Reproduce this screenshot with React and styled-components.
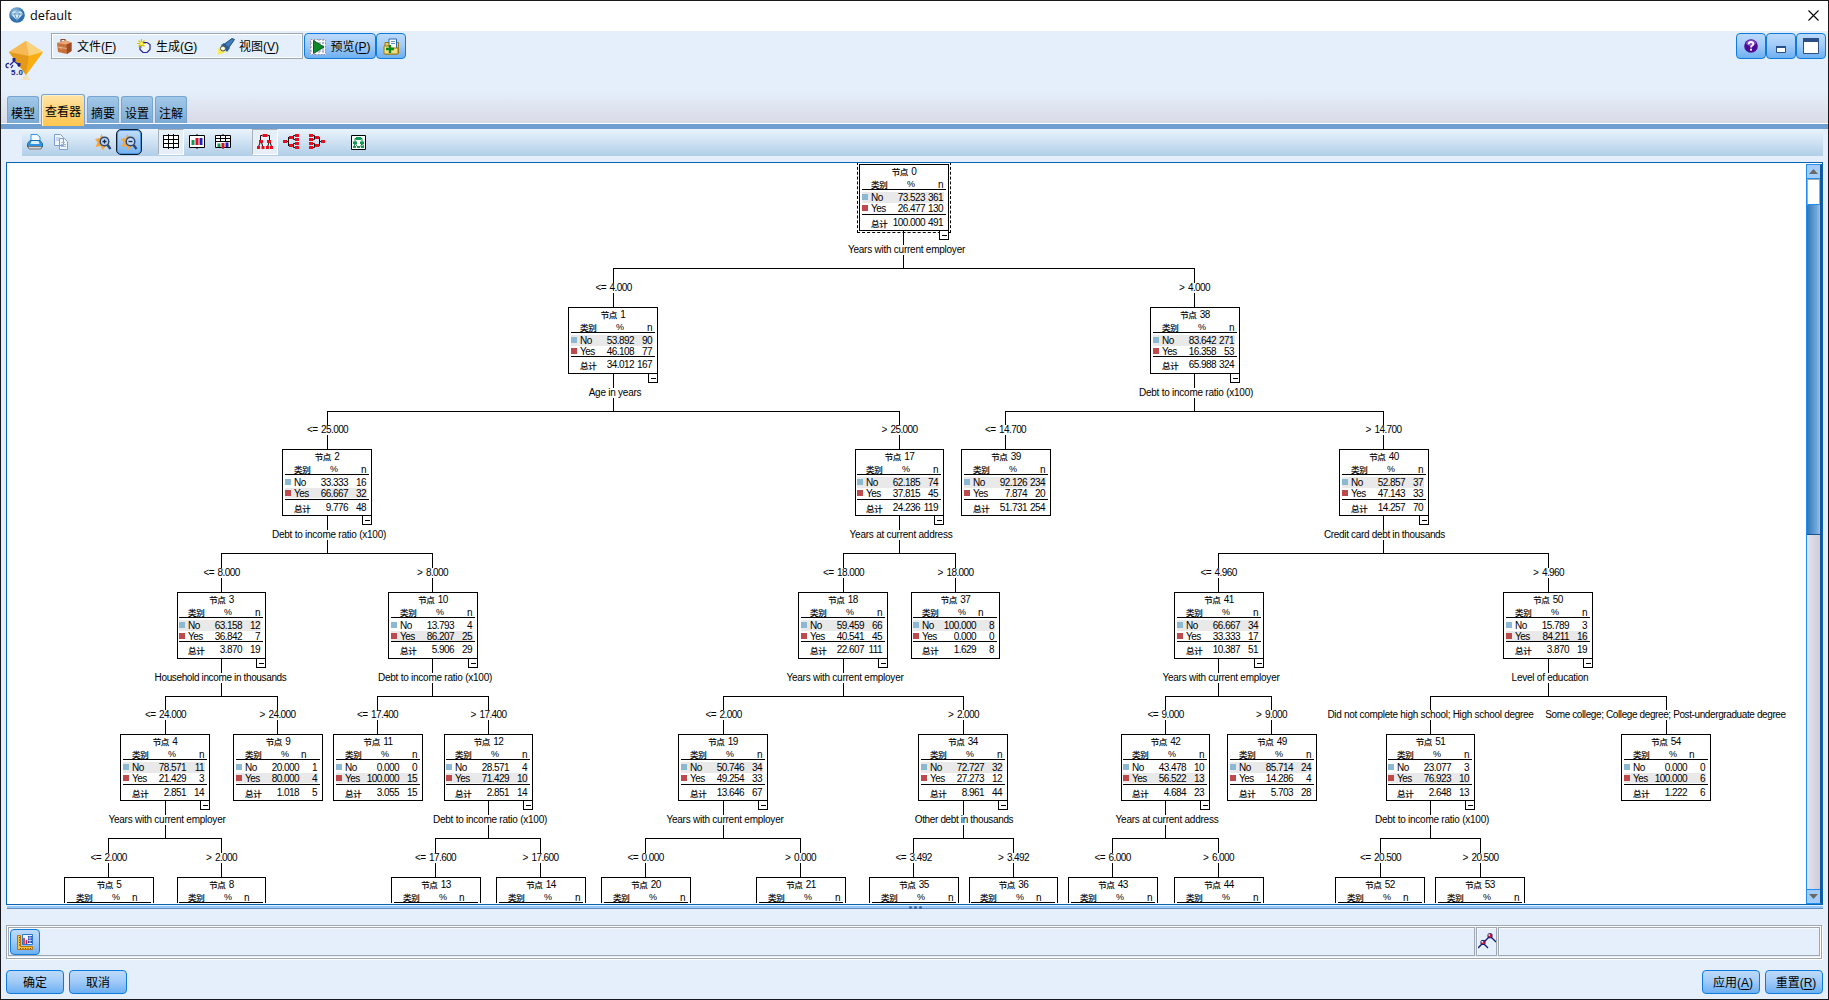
import React from "react";
import styled, { createGlobalStyle, css } from "styled-components";

const Global = createGlobalStyle`
  * { box-sizing: border-box; }
  html, body { margin: 0; padding: 0; height: 1000px; overflow: hidden; }
  body { font-family: "Liberation Sans", "Noto Sans CJK SC", sans-serif; font-size: 12px; color: #000; }
  svg { display: block; flex: none; }
`;

/* ---------- window chrome ---------- */
const Window = styled.div`
  width: 1829px; height: 1000px; overflow: hidden;
  display: flex; flex-direction: column;
  border: 1px solid #17171c;
  background: #e4effb;
`;
const TitleBar = styled.header`
  height: 30px; flex: none;
  display: flex; align-items: center; justify-content: space-between;
  padding: 0 9px 2px 8px;
  background: #fff;
`;
const Title = styled.div`
  display: flex; align-items: center; gap: 5px;
  font: 12.7px/16px "Open Sans", "Noto Sans", sans-serif;
`;
const Header = styled.section`
  height: 92px; flex: none;
  display: flex; flex-direction: column; justify-content: space-between;
  background: linear-gradient(#e4effb 0 60px, #d9dae6 92px);
`;
const HeaderTop = styled.div`
  display: flex; align-items: flex-start; padding: 2px 2px 0 5px;
`;
const LogoBox = styled.div` width: 45px; padding-top: 7px; height: 52px; flex: none; margin-left: -1px; margin-right: 1px; `;
const MenuBar = styled.nav`
  width: 252px; height: 26px;
  display: flex; align-items: center;
  padding-left: 4px;
  border: 1px solid #a0a8b2;
  box-shadow: inset 1px 1px #fff, inset -1px -1px #fff;
`;
const MenuItem = styled.div`
  width: 81px; display: flex; align-items: center; gap: 4px;
  line-height: 20px; white-space: nowrap; padding-top: 1px;
  span { padding-top: 1px; }
`;
const Key = styled.u` text-underline-offset: 2px; `;
const Button = styled.button`
  width: ${p => p.$w}px; height: ${p => p.$h || 26}px; flex: none;
  display: flex; align-items: center; justify-content: center; gap: 4px;
  margin: 0; padding: ${p => p.$pad || "0"};
  font: 12px/20px "Liberation Sans", "Noto Sans CJK SC", sans-serif; color: #000; white-space: nowrap;
  border: 1px solid #0c7bdc; border-radius: 4px;
  background: linear-gradient(#bddafb, #a3ccf8 45%, #6eb0f2);
`;
const Group = styled.div` display: flex; margin-left: ${p => p.$left || "0"}; gap: ${p => p.$gap || 0}px; `;
const Tabs = styled.div`
  display: flex; align-items: flex-end; gap: 2px; padding-left: 6px; height: 29px;
`;
const Tab = styled.div`
  width: 32px; height: 27px; line-height: 34px; text-align: center;
  border: 1px solid #74a5d3; border-bottom: 0; border-radius: 3px 3px 0 0;
  background: linear-gradient(#a3c8e8, #7caad4);
  ${p => p.$active && css`
    width: 44px; height: 32px; margin-bottom: -3px; z-index: 1; line-height: 34px;
    background: linear-gradient(#ffe3a6, #ffc64f);
    box-shadow: inset 1px 1px #ffefc8;
  `}
`;
const Band = styled.div`
  height: 6px; flex: none; background: #6f9fd0; border-top: 1px solid #fff;
`;
const ToolBar = styled.div`
  height: 27px; margin: 0 5px 0 21px; flex: none;
  display: flex; align-items: flex-start;
  background: linear-gradient(#eaf4fd, #b1cee7);
`;
const Tool = styled.div`
  width: 26px; height: 26px; margin-left: ${p => p.$gap || 0}px;
  display: flex; align-items: center; justify-content: center;
  ${p => p.$pressed && css`border: 1px solid #a9b1bb; border-right-color: #fff; border-bottom-color: #fff; background: #e6eff8;`}
  ${p => p.$focused && css`border: 1px solid #0d1c2c; border-radius: 5px; background: linear-gradient(#c4ddf8, #75b3f2); box-shadow: inset 0 0 0 1px #4d96dd;`}
`;

/* ---------- tree viewer ---------- */
const Viewer = styled.main`
  height: 743px; margin: 6px 5px 0 5px; flex: none;
  display: flex; justify-content: space-between;
  border: 1px solid #0a64b4; background: #fff;
`;
const Canvas = styled.div`
  position: relative; width: 1798px; height: 740px; overflow: hidden;
`;
const Links = styled.svg` position: absolute; left: 0; top: 0; `;
const NodeBox = styled.div`
  position: absolute; left: ${p => p.$x}px; top: ${p => p.$y}px;
  width: ${p => p.$w}px; height: 67px; padding: 0 ${p => (p.$w < 90 ? 1 : 2)}px;
  border: 1px solid #000; background: #fff;
  font-size: 10px; letter-spacing: -0.55px;
  ${p => p.$root && css`outline: 1px dashed #000; outline-offset: 1px;`}
`;
const Cjk = styled.span` font: 8.5px "Noto Sans CJK SC", sans-serif; letter-spacing: -0.3px; -webkit-text-stroke: 0.2px #000; `;
const NodeTitle = styled.div` height: 13px; line-height: 12px; text-align: center; white-space: pre; word-spacing: 1px; `;
const Grid = styled.div`
  display: grid; grid-template-columns: 9px 18px 36px 18px 1px;
  align-items: center; height: ${p => p.$h}px; line-height: 11px;
  background: ${p => (p.$hot ? "#e9e9e9" : "none")};
  width: 82px;
`;
const HeadRow = styled(Grid)` width: 84px; border-bottom: 1px solid #000; `;
const Body = styled.div` padding-top: 2px; width: 84px; height: ${p => p.$h}px; border-bottom: 1px solid #000; `;
const Num = styled.span` text-align: right; white-space: nowrap; `;
const Percent = styled.span` padding-left: 18px; font-size: 9px; `;
const CountHead = styled.span` text-align: right; padding-right: ${p => (p.$shift ? 11 : 0)}px; `;
const Swatch = styled.span` width: 6px; height: 6px; margin-top: -2px; background: ${p => p.$c}; `;
const Toggle = styled.span`
  position: absolute; right: -1px; top: 65px; width: 10px; height: 10px;
  display: flex; align-items: center; justify-content: center;
  border: 1px solid #000; background: #fff;
  &::after { content: ""; width: 5px; height: 1px; background: #000; }
`;
const Label = styled.div`
  position: absolute; left: ${p => p.$x}px; top: ${p => p.$y}px;
  transform: translateX(-50%);
  height: 10px; line-height: 10px; font-size: 10px; white-space: pre;
  letter-spacing: ${p => (p.$value ? -0.6 : p.$ls)}px; background: #fff;
  word-spacing: ${p => (p.$value ? 1.5 : 0)}px;
`;

const ScrollBar = styled.div`
  width: 16px; margin: 1px 0 0; height: 740px; display: flex; flex-direction: column;
  border: 1px solid #1e8ff0; border-right: 2px solid #1a5596; background: linear-gradient(90deg, #e3e3ea, #cdccd8);
`;
const ScrollButton = styled.div`
  height: 14px; flex: none; display: flex; align-items: center; justify-content: center;
  background: #a4cdfb; border: solid #1e8ff0; border-width: ${p => (p.$down ? "1px 0 0" : "0 0 1px")};
`;
const TrackTop = styled.div` height: 26px; flex: none; background: #fff; border: 1px solid #aaa; border-bottom-color: #1e8ff0; `;
const Thumb = styled.div` height: 330px; flex: none; background: linear-gradient(90deg, #3177b5, #72a9dc 75%, #98c3eb); border-bottom: 1px solid #17548f; `;
const TrackRest = styled.div` flex: 1; `;

const Splitter = styled.div`
  height: 3px; margin: 1px 5px 0 6px; flex: none;
  display: flex; justify-content: center; gap: 2px;
  background: #99c9fb; border-bottom: 1px solid #608ec4;
`;
const Grip = styled.i` width: 3px; height: 3px; border-radius: 50%; background: #3465a4; `;

/* ---------- status and actions ---------- */
const Status = styled.footer`
  height: 34px; margin: 16px 6px 0 5px; flex: none; display: flex; gap: 1px; padding: 1px;
  border: 1px solid #a0a7b4; box-shadow: inset -1px -1px #fff, inset 1px 1px #fff, 1px 1px #fff;
`;
const Cell = styled.div`
  ${p => (p.$w ? css`width: ${p.$w}px;` : css`flex: 1;`)}
  height: 29px; display: flex; align-items: center; padding: 0 1px;
  border: 1px solid #a0a7b4; box-shadow: inset 1px 1px #f6faff;
`;
const Actions = styled.div`
  margin: 11px 5px 0; display: flex; justify-content: space-between;
`;

/* ---------- data ---------- */
const LEVEL_Y = [164, 307, 449, 592, 734, 877];
const BAR_Y = [268, 411, 553, 696, 838];
const NARROW = [3, 17, 37, 12, 42, 51, 8, 36];
const OX = 7, OY = 163;
const n = (id, lv, left, cx, parent, cond, no, yes, tot, hot, split, opt = {}) =>
  ({ id, lv, left, cx, parent, cond, no, yes, tot, hot, split, ...opt });
const NODES = [
  n(0, 0, 859, 903, null, "", "73.523 361", "26.477 130", "100.000 491", 0, "Years with current employer", { dx: 3.5 }),
  n(1, 1, 568, 613, 0, "<= 4.000", "53.892 90", "46.108 77", "34.012 167", 0, "Age in years"),
  n(38, 1, 1150, 1194, 0, "> 4.000", "83.642 271", "16.358 53", "65.988 324", 0, "Debt to income ratio (x100)"),
  n(2, 2, 282, 327, 1, "<= 25.000", "33.333 16", "66.667 32", "9.776 48", 1, "Debt to income ratio (x100)"),
  n(17, 2, 855, 899, 1, "> 25.000", "62.185 74", "37.815 45", "24.236 119", 0, "Years at current address"),
  n(39, 2, 961, 1005, 38, "<= 14.700", "92.126 234", "7.874 20", "51.731 254", 0, ""),
  n(40, 2, 1339, 1383, 38, "> 14.700", "52.857 37", "47.143 33", "14.257 70", 0, "Credit card debt in thousands", { dx: 1.5, ls: -0.33 }),
  n(3, 3, 177, 221, 2, "<= 8.000", "63.158 12", "36.842 7", "3.870 19", 0, "Household income in thousands", { dx: -0.5, ls: -0.36 }),
  n(10, 3, 388, 432, 2, "> 8.000", "13.793 4", "86.207 25", "5.906 29", 1, "Debt to income ratio (x100)", { dx: 3 }),
  n(18, 3, 798, 843, 17, "<= 18.000", "59.459 66", "40.541 45", "22.607 111", 0, "Years with current employer"),
  n(37, 3, 911, 955, 17, "> 18.000", "100.000 8", "0.000 0", "1.629 8", 0, "", { shift: 1 }),
  n(41, 3, 1174, 1218, 40, "<= 4.960", "66.667 34", "33.333 17", "10.387 51", 0, "Years with current employer", { dx: 3 }),
  n(50, 3, 1503, 1548, 40, "> 4.960", "15.789 3", "84.211 16", "3.870 19", 1, "Level of education"),
  n(4, 4, 120, 165, 3, "<= 24.000", "78.571 11", "21.429 3", "2.851 14", 0, "Years with current employer"),
  n(9, 4, 233, 277, 3, "> 24.000", "20.000 1", "80.000 4", "1.018 5", 1, "", { shift: 1 }),
  n(11, 4, 333, 377, 10, "<= 17.400", "0.000 0", "100.000 15", "3.055 15", 1, ""),
  n(12, 4, 444, 488, 10, "> 17.400", "28.571 4", "71.429 10", "2.851 14", 1, "Debt to income ratio (x100)"),
  n(19, 4, 678, 723, 18, "<= 2.000", "50.746 34", "49.254 33", "13.646 67", 0, "Years with current employer"),
  n(34, 4, 918, 963, 18, "> 2.000", "72.727 32", "27.273 12", "8.961 44", 0, "Other debt in thousands", { dx: 1, ls: -0.36 }),
  n(42, 4, 1121, 1165, 41, "<= 9.000", "43.478 10", "56.522 13", "4.684 23", 1, "Years at current address"),
  n(49, 4, 1227, 1271, 41, "> 9.000", "85.714 24", "14.286 4", "5.703 28", 0, ""),
  n(51, 4, 1386, 1430, 50, "Did not complete high school; High school degree", "23.077 3", "76.923 10", "2.648 13", 1, "Debt to income ratio (x100)", { condLs: -0.29 }),
  n(54, 4, 1621, 1666, 50, "Some college; College degree; Post-undergraduate degree", "0.000 0", "100.000 6", "1.222 6", 1, "", { shift: 1, condLs: -0.39, condDx: -1 }),
  n(5, 5, 64, 108, 4, "<= 2.000", "", "", "", null, "", { shift: 1 }),
  n(8, 5, 177, 221, 4, "> 2.000", "", "", "", null, "", { shift: 1 }),
  n(13, 5, 391, 435, 12, "<= 17.600", "", "", "", null, "", { shift: 1 }),
  n(14, 5, 496, 540, 12, "> 17.600", "", "", "", null, ""),
  n(20, 5, 601, 645, 19, "<= 0.000", "", "", "", null, ""),
  n(21, 5, 756, 800, 19, "> 0.000", "", "", "", null, ""),
  n(35, 5, 869, 913, 34, "<= 3.492", "", "", "", null, ""),
  n(36, 5, 969, 1013, 34, "> 3.492", "", "", "", null, "", { shift: 1 }),
  n(43, 5, 1068, 1112, 42, "<= 6.000", "", "", "", null, ""),
  n(44, 5, 1174, 1218, 42, "> 6.000", "", "", "", null, ""),
  n(52, 5, 1335, 1380, 51, "<= 20.500", "", "", "", null, "", { shift: 1 }),
  n(53, 5, 1435, 1480, 51, "> 20.500", "", "", "", null, ""),
];

function Row({ color, name, value, hot, h }) {
  const [pct, count] = value.split(" ");
  return (
    <Grid $h={h} $hot={hot}>
      <Swatch $c={color} /><span>{name}</span><Num>{pct}</Num><Num>{count}</Num>
    </Grid>
  );
}

function TreeNode({ d }) {
  const [tp, tc] = d.tot.split(" ");
  return (
    <NodeBox $x={d.left - OX} $y={LEVEL_Y[d.lv] - OY} $w={NARROW.includes(d.id) ? 89 : 90} $root={d.id === 0}>
      <NodeTitle><Cjk>节点</Cjk> {d.id}</NodeTitle>
      <HeadRow $h={12}>
        <span /><Cjk>类别</Cjk><Percent>%</Percent><CountHead $shift={d.shift}>n</CountHead>
      </HeadRow>
      {d.no && (
        <>
          <Body $h={d.lv % 2 ? 24 : 25}>
            <Row color="#8bb8d2" name="No" value={d.no} hot={d.hot === 0} h={11} />
            <Row color="#bf4a4d" name="Yes" value={d.yes} hot={d.hot === 1} h={10} />
          </Body>
          <Grid $h={15}>
            <span /><Cjk>总计</Cjk><Num>{tp}</Num><Num>{tc}</Num>
          </Grid>
        </>
      )}
      {d.split && <Toggle />}
    </NodeBox>
  );
}

function Tree() {
  let path = "";
  NODES.forEach(p => {
    const kids = NODES.filter(k => k.parent === p.id);
    if (!kids.length) return;
    const py = LEVEL_Y[p.lv] - OY;
    const bar = BAR_Y[p.lv] - OY + 0.5;
    path += `M${p.cx - OX + 0.5} ${py + 66}V${bar}`;
    path += `M${kids[0].cx - OX} ${bar}H${kids[kids.length - 1].cx - OX + 1}`;
    kids.forEach(k => { path += `M${k.cx - OX + 0.5} ${bar}V${LEVEL_Y[k.lv] - OY}`; });
  });
  return (
    <Canvas>
      <Links width="1798" height="740"><path d={path} fill="none" stroke="#000" /></Links>
      {NODES.map(d => <TreeNode key={d.id} d={d} />)}
      {NODES.map(d => d.cond && (
        <Label key={d.id} $value={d.cond.length < 12} $ls={d.condLs} $x={d.cx - OX + 0.5 + (d.condDx || 0)} $y={LEVEL_Y[d.lv] - OY - 24}>{d.cond}</Label>
      ))}
      {NODES.map(d => d.split && (
        <Label key={d.id} $ls={d.ls ?? -0.24} $x={d.cx - OX + (d.dx ?? 2)} $y={LEVEL_Y[d.lv] - OY + 81}>{d.split}</Label>
      ))}
    </Canvas>
  );
}

/* ---------- icons ---------- */
const AppIcon = () => (
  <svg width="16" height="16" viewBox="0 0 16 16">
    <defs><radialGradient id="ball" cx=".4" cy=".3"><stop offset="0" stopColor="#9fc9e8" /><stop offset="1" stopColor="#2e6fae" /></radialGradient></defs>
    <circle cx="8" cy="8" r="7.8" fill="url(#ball)" />
    <path d="M4 4.5h8l2 2.5-6 6.5L2 7z" fill="#dcecf8" />
    <path d="M2 7h12M5.5 7 8 13.5 10.500 7 8 4.500z" fill="none" stroke="#5f9aca" />
  </svg>
);
const CloseIcon = () => (
  <svg width="11" height="11" viewBox="0 0 11 11"><path d="M.5.5l10 10M10.500.5l-10 10" stroke="#000" strokeWidth="1.1" /></svg>
);
const ModelLogo = () => (
  <svg width="40" height="42" viewBox="5 41 40 42">
    <defs><linearGradient id="gem" x1="0" x2="1"><stop offset="0" stopColor="#e79a12" /><stop offset="1" stopColor="#ffc52e" /></linearGradient></defs>
    <path d="M26 75l5 6H21z" fill="#f3dfb4" opacity=".8" />
    <path d="M26 42l17 11-17 23L9 53z" fill="url(#gem)" />
    <path d="M26 42l17 11-14 4L9 53z" fill="#fbd27c" /><path d="M26 42l3 15L9 53z" fill="#f6b956" />
    <path d="M29 57l-3 19L9 53z" fill="#e39a1b" /><path d="M29 57l14-4-17 23z" fill="#f9ae12" />
    <path d="M10 66l4-4 5 4M14 60v3M9 64.500q-2.500-.5-3 2 0 2.500 2.500 2M19 65v3M13 66l-2 3" fill="none" stroke="#20208a" strokeWidth="1.300" />
    <rect x="12.500" y="59" width="3" height="3" fill="#20208a" /><rect x="17.500" y="64" width="3" height="3" fill="#20208a" />
    <text x="11" y="75.500" fontSize="8" fontWeight="700" fill="#20208a" fontFamily="Liberation Sans" textLength="12">5.0</text>
  </svg>
);
const BagIcon = () => (
  <svg width="17" height="17" viewBox="0 0 17 17">
    <path d="M5 4V1.500h4V4" fill="none" stroke="#8a4a2a" strokeWidth="1.200" />
    <path d="M1 5l9-2.500 5.500 2V13L11 16 2 14z" fill="#c9713c" /><path d="M1 5l9.500 1.500L15.500 4.500 9.500 2.500z" fill="#e9a878" />
    <path d="M10.500 6.500l5-2V13l-4.500 3z" fill="#9a4c23" /><path d="M1.500 9l9 1.500M5 8.500v3" stroke="#e8b489" />
  </svg>
);
const GenerateIcon = () => (
  <svg width="15" height="15" viewBox="0 0 15 15">
    <path d="M6 3.500h4l3 2v5l-3 3H6l-3-3v-4z" fill="#eef5ff" stroke="#24249a" strokeWidth="1.200" />
    <path d="M4.500 0v9M0 4.500h9M1.500 1.500l6 6M7.500 1.500l-6 6" stroke="#d6c400" strokeWidth="1.200" /><circle cx="4.500" cy="4.500" r="1.500" fill="#fff36b" />
  </svg>
);
const TorchIcon = () => (
  <svg width="17" height="17" viewBox="0 0 17 17">
    <path d="M0 11l4-4 5 5-3.500 3.500L0 16.500z" fill="#f7e85a" /><path d="M3 7l3-2 6 5-3 4z" fill="#2d5f96" />
    <path d="M6.500 6L14 .5l2.500 1L10.500 10z" fill="#3f7fbd" stroke="#1f4b7c" /><circle cx="5" cy="10.500" r="2.500" fill="#fffbd0" stroke="#35506e" />
  </svg>
);
const PreviewIcon = () => (
  <svg width="16" height="16" viewBox="0 0 16 16">
    <path d="M0 0h16v16H0z" fill="#fff" /><path d="M.5.5h15v15H.5zM0 4h16M0 8h16M0 12h16M4.500 0v16M9 0v16M13 0v16" fill="none" stroke="#8b90b8" strokeDasharray="2 1" />
    <path d="M3.500 1.500L14 8 3.500 14.500z" fill="#0d8a2c" stroke="#0a5c1e" />
  </svg>
);
const ClipIcon = () => (
  <svg width="17" height="17" viewBox="0 0 17 17">
    <path d="M2 4.500h13.500v10.500l-1 1H2z" fill="#eecb4b" stroke="#9a7a12" /><path d="M6 1h7.500v10H6z" fill="#fff" stroke="#2c66b0" />
    <path d="M8 3.500h4M8 5.500h4" stroke="#5a91ce" /><path d="M1 8h5l1.500 2H15v6H1z" fill="#f4df86" stroke="#9a7a12" /><path d="M7 7v8M3 11h8" stroke="#0c8a1c" strokeWidth="2.400" />
  </svg>
);
const HelpIcon = () => (
  <svg width="14" height="14" viewBox="0 0 14 14"><circle cx="7" cy="7" r="6.800" fill="#4e0a96" /><ellipse cx="7" cy="4" rx="5" ry="3" fill="#8a50c4" />
    <path d="M4.700 5.200Q4.800 3 7 3t2.300 1.800Q9.300 6 8 6.800 7 7.400 7 8.600" fill="none" stroke="#fff" strokeWidth="1.800" /><rect x="6" y="9.700" width="2" height="1.900" fill="#fff" /></svg>
);
const MinIcon = () => (<svg width="10" height="16" viewBox="0 0 10 16"><path d="M.5 9.500h9v5h-9z" fill="#fff" stroke="#2a4f86" /><path d="M0 9h10" stroke="#2a4f86" strokeWidth="2" /></svg>);
const MaxIcon = () => (<svg width="16" height="16" viewBox="0 0 16 16"><path d="M.5.5h15v15H.5z" fill="#fff" stroke="#2a4f86" /><path d="M0 0h16v4H0z" fill="#2a4f86" /></svg>);
const PrinterIcon = () => (
  <svg width="16" height="16" viewBox="0 0 16 16"><path d="M4 8V.5h6l3 2.500v5z" fill="#f4fbff" stroke="#3597e3" />
    <path d="M3 6.500L.5 9.500V13h15V9.500L13 6.500z" fill="#2f93e0" stroke="#1a6ab2" /><path d="M3.500 10l1-3h7l1 3z" fill="#d9efff" /><path d="M1 12.500h14l-1 2.500H2z" fill="#d6d6d6" stroke="#777" /></svg>
);
const CopyIcon = () => (
  <svg width="15" height="16" viewBox="0 0 15 16"><path d="M.5.5h6l3 3v8h-9zM5.500 4.500h5l3 3v8h-8z" fill="#f1f6fd" stroke="#7f9fd0" /><path d="M2 4h4M2 6h3M7 8.500h4M7 10.500h5M7 12.500h5" stroke="#9bb8de" /></svg>
);
const ZoomIcon = ({ plus }) => (
  <svg width="17" height="17" viewBox="0 0 17 17"><path d="M6.500 0l2 4 5-1-1 5 3 4-5 .5-3 3.500-2-4-5 1 2-4.500L0 5l5-1z" fill="#f7a53c" />
    <circle cx="9.500" cy="7.500" r="4.300" fill="#c5d9ee" stroke="#254a80" strokeWidth="1.500" /><path d="M12.500 11l3 4" stroke="#254a80" strokeWidth="2.400" />
    <path d={plus ? "M7.500 7.500h4M9.500 5.500v4" : "M7.500 7.500h4"} stroke="#14284c" strokeWidth="1.300" /></svg>
);
const GridIcon = () => (
  <svg width="16" height="16" viewBox="0 0 16 16"><path d="M.5 1.500h15v12H.5z" fill="#fff" /><path d="M0 1.500h16M0 5.500h16M0 9.500h16M0 13.500h16M.5 1v13M5.500 0v15M10.500 0v15M15.500 1v13" stroke="#000" /></svg>
);
const ChartIcon = () => (
  <svg width="16" height="16" viewBox="0 0 16 16"><path d="M.5 1.500h15v12H.5z" fill="#fff" stroke="#000" /><path d="M8 0v2M8 14v1" stroke="#000" />
    <path d="M2.500 6h3v5h-3z" fill="#159455" /><path d="M6.500 4h3v7h-3z" fill="#e01023" /><path d="M10.500 4h3v7h-3z" fill="#1722c8" /></svg>
);
const TableChartIcon = () => (
  <svg width="16" height="16" viewBox="0 0 16 16"><path d="M.5 1.500h15v12H.5z" fill="#fff" stroke="#000" /><path d="M0 4.500h16M0 7.500h16M5.500 1v7M10.500 1v7M8 0v1M8 14v1" stroke="#000" />
    <path d="M2.500 9.500h3V13h-3z" fill="#159455" /><path d="M6.500 9h3v5h-3z" fill="#e01023" /><path d="M10.500 8.500h3V13h-3z" fill="#1722c8" /></svg>
);
const OrgIcon = () => (
  <svg width="16" height="16" viewBox="0 0 16 16">
    <path d="M5.500 1.500H3.500V7L1.500 13M4 7l2 6M10.500 1.500h2V7l-2 6M13 7l1.500 6" fill="none" stroke="#111" />
    <path d="M5.500 0h5v3h-5zM2 6h4v3H2zM10 6h4v3h-4zM0 12h3v3H0zM4.500 12h3v3h-3zM9 12h3v3H9zM13 12h3v3h-3z" fill="#e80d1c" />
  </svg>
);
const SideOrgIcon = ({ flip }) => (
  <svg width="16" height="16" viewBox="0 0 16 16"><g transform={flip ? "matrix(-1 0 0 1 16 0)" : undefined}>
    <path d="M4 7.500h1.500M5.500 3v9M5.500 3.500h2M5.500 11.500h2M10.500 1.500v4M10.500 9.500v4M10.500 1.500h2M10.500 5.500h2M10.500 9.500h2M10.500 13.500h2" fill="none" stroke="#111" />
    <path d="M0 6h4v3H0zM6 2h4v3H6zM6 10h4v3H6zM12 0h4v3h-4zM12 4h4v3h-4zM12 8h4v3h-4zM12 12h4v3h-4z" fill="#e80d1c" /></g>
  </svg>
);
const MapIcon = () => (
  <svg width="15" height="15" viewBox="0 0 15 15"><path d="M.5.5h14v14H.5z" fill="#fff" stroke="#000" />
    <path d="M7 3.500H4v5l-1 3M4 8l2 3M7 3.500h4v5l-1.500 3M11 8l1.500 3" fill="none" stroke="#0d7b40" /><path d="M5 2h5v3H5zM2 6.500h4V9H2zM9 6.500h4V9H9zM2 11h3v2H2zM6 11h3v2H6zM10 11h3v2h-3z" fill="#139a52" /></svg>
);
const Arrow = ({ down }) => (<svg width="9" height="5" viewBox="0 0 9 5"><path d={down ? "M0 0h9L4.500 5z" : "M0 5h9L4.500 0z"} fill="#696969" /></svg>);
const RulerIcon = () => (
  <svg width="16" height="16" viewBox="0 0 16 16"><path d="M.5 1.500h3v11h12v3H.5z" fill="#f6c33c" stroke="#b87411" /><path d="M2.500 3v9M3 14.500h12" stroke="#6d430a" strokeDasharray="1 1.500" />
    <path d="M5.500.5h10v10h-10z" fill="#e9f4ff" stroke="#2879cf" /><path d="M7 4v6M9.500 6v4" stroke="#c22745" strokeWidth="1.600" /><path d="M11 2h4v7h-4z" fill="#2747b8" /><path d="M11 4h4M11 6.500h4M13 2v7" stroke="#fff" strokeWidth=".6" /></svg>
);
const LinkIcon = () => (
  <svg width="18" height="17" viewBox="0 0 18 17"><path d="M0 15l5-5 7-7 6 6M5 10l5 5" fill="none" stroke="#191978" strokeWidth="1.400" />
    <rect x="3" y="7.500" width="4" height="4" rx="1" fill="#e81a26" stroke="#191978" /><rect x="10" y=".8" width="4" height="4" rx="1" fill="#e81a26" stroke="#191978" />
    <rect x="3.500" y="8" width="1.500" height="1.500" fill="#fff" /><rect x="10.500" y="1.300" width="1.500" height="1.500" fill="#fff" /></svg>
);

export default function App() {
  return (
    <Window>
      <Global />
      <TitleBar>
        <Title><AppIcon />default</Title>
        <CloseIcon />
      </TitleBar>
      <Header>
        <HeaderTop>
          <LogoBox><ModelLogo /></LogoBox>
          <MenuBar>
            <MenuItem><BagIcon /><span>文件(<Key>F</Key>)</span></MenuItem>
            <MenuItem><GenerateIcon /><span>生成(<Key>G</Key>)</span></MenuItem>
            <MenuItem><TorchIcon /><span>视图(<Key>V</Key>)</span></MenuItem>
          </MenuBar>
          <Group $left="1px">
            <Button $w={72} $pad="1px 0 0 1px"><PreviewIcon /><span>预览(<Key>P</Key>)</span></Button>
            <Button $w={30}><ClipIcon /></Button>
          </Group>
          <Group $left="auto">
            <Button $w={30}><HelpIcon /></Button>
            <Button $w={30}><MinIcon /></Button>
            <Button $w={30}><MaxIcon /></Button>
          </Group>
        </HeaderTop>
        <Tabs>
          <Tab>模型</Tab><Tab $active>查看器</Tab><Tab>摘要</Tab><Tab>设置</Tab><Tab>注解</Tab>
        </Tabs>
      </Header>
      <Band />
      <ToolBar>
        <Tool><PrinterIcon /></Tool>
        <Tool><CopyIcon /></Tool>
        <Tool $gap={16}><ZoomIcon plus /></Tool>
        <Tool $focused><ZoomIcon /></Tool>
        <Tool $gap={16} $pressed><GridIcon /></Tool>
        <Tool><ChartIcon /></Tool>
        <Tool><TableChartIcon /></Tool>
        <Tool $gap={16} $pressed><OrgIcon /></Tool>
        <Tool><SideOrgIcon /></Tool>
        <Tool><SideOrgIcon flip /></Tool>
        <Tool $gap={15}><MapIcon /></Tool>
      </ToolBar>
      <Viewer>
        <Tree />
        <ScrollBar>
          <ScrollButton><Arrow /></ScrollButton>
          <TrackTop /><Thumb /><TrackRest />
          <ScrollButton $down><Arrow down /></ScrollButton>
        </ScrollBar>
      </Viewer>
      <Splitter><Grip /><Grip /><Grip /></Splitter>
      <Status>
        <Cell $w={1467}><Button $w={30}><RulerIcon /></Button></Cell>
        <Cell $w={21}><LinkIcon /></Cell>
        <Cell />
      </Status>
      <Actions>
        <Group $gap={5}><Button $w={58} $h={24} $pad="2px 0 0">确定</Button><Button $w={58} $h={24} $pad="2px 0 0">取消</Button></Group>
        <Group $gap={5}>
          <Button $w={58} $h={24} $pad="2px 0 0 4px"><span>应用(<Key>A</Key>)</span></Button>
          <Button $w={58} $h={24} $pad="2px 0 0 4px"><span>重置(<Key>R</Key>)</span></Button>
        </Group>
      </Actions>
    </Window>
  );
}
